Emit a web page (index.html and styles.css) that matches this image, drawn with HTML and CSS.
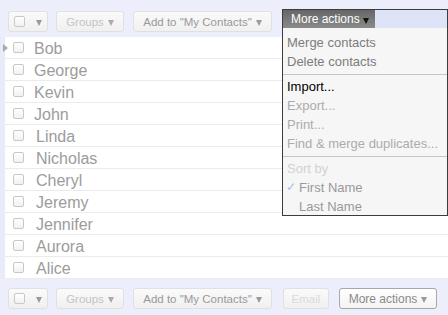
FILE: index.html
```html
<!DOCTYPE html>
<html lang="en">
<head>
    <meta charset="UTF-8">
    <meta name="viewport" content="width=device-width, initial-scale=1.0">
    <title>Contacts</title>
    <link rel="stylesheet" href="styles.css">
</head>
<body>

    <div class="toolbar toolbar-top">
        <button class="btn btn-check"><span class="box"></span><span class="caret"></span></button>
        <button class="btn btn-groups">Groups<span class="caret"></span></button>
        <button class="btn btn-add">Add to "My Contacts"<span class="caret"></span></button>

        <!-- open "More actions" menu -->
        <div class="menu">
            <div class="menu-head">
                <span class="menu-tab">More actions<span class="caret caret-dark"></span></span>
            </div>
            <div class="menu-body">
                <div class="item item-mid">Merge contacts</div>
                <div class="item item-mid">Delete contacts</div>
                <div class="sep"></div>
                <div class="item item-on">Import...</div>
                <div class="item item-off">Export...</div>
                <div class="item item-off">Print...</div>
                <div class="item item-off">Find &amp; merge duplicates...</div>
                <div class="sep"></div>
                <div class="item item-label">Sort by</div>
                <div class="item item-sort"><span class="check">&#10003;</span>First Name</div>
                <div class="item item-sort">Last Name</div>
            </div>
        </div>
    </div>

    <ul class="contacts">
        <li class="row current"><span class="marker"></span><span class="box"></span><span class="name">Bob</span></li>
        <li class="row"><span class="box"></span><span class="name">George</span></li>
        <li class="row"><span class="box"></span><span class="name">Kevin</span></li>
        <li class="row"><span class="box"></span><span class="name">John</span></li>
        <li class="row"><span class="box"></span><span class="name shift">Linda</span></li>
        <li class="row"><span class="box"></span><span class="name shift">Nicholas</span></li>
        <li class="row"><span class="box"></span><span class="name shift">Cheryl</span></li>
        <li class="row"><span class="box"></span><span class="name shift">Jeremy</span></li>
        <li class="row"><span class="box"></span><span class="name shift">Jennifer</span></li>
        <li class="row"><span class="box"></span><span class="name shift">Aurora</span></li>
        <li class="row"><span class="box"></span><span class="name shift">Alice</span></li>
    </ul>

    <div class="toolbar toolbar-bottom">
        <button class="btn btn-check"><span class="box"></span><span class="caret"></span></button>
        <button class="btn btn-groups">Groups<span class="caret"></span></button>
        <button class="btn btn-add">Add to "My Contacts"<span class="caret"></span></button>
        <button class="btn btn-email">Email</button>
        <button class="btn btn-more">More actions<span class="caret"></span></button>
    </div>

</body>
</html>
```

FILE: styles.css
```css
* {
    margin: 0;
    padding: 0;
    box-sizing: border-box;
}

body {
    font-family: "Liberation Sans", Arial, sans-serif;
    background-color: #e8ebf9;
    color: #999;
    width: 448px;
    height: 315px;
    overflow: hidden;
}

/* toolbars */

.toolbar {
    display: flex;
    align-items: flex-start;
    background-color: #eceffb;
    padding-left: 8px;
}

.toolbar-top {
    position: relative;
    height: 37px;
    padding-top: 11px;
}

.toolbar-bottom {
    height: 36px;
    padding-top: 9px;
}

.btn {
    display: flex;
    align-items: center;
    justify-content: center;
    height: 21px;
    margin-right: 8px;
    font-family: inherit;
    font-size: 11.5px;
    color: #c4c4c4;
    background: linear-gradient(#fafafa, #f0f0f0);
    border: 1px solid #e0e0e0;
    border-radius: 3px;
    white-space: nowrap;
}

.btn-check {
    width: 40px;
    justify-content: flex-start;
    padding-left: 5px;
}

.btn-check .box {
    margin-right: 7px;
}

.btn-groups {
    width: 68px;
    margin-right: 9px;
}

.btn-add {
    width: 139px;
    color: #999;
    margin-right: 11px;
}

.btn-email {
    width: 46px;
    color: #dadada;
    margin-right: 10px;
}

.btn-more {
    width: 98px;
    font-size: 12px;
    color: #8a8a8a;
    background: linear-gradient(#ffffff, #f3f3f3);
    border-color: #a8a8a8;
}

.caret {
    display: inline-block;
    width: 0;
    height: 0;
    margin-left: 4px;
    margin-top: 3px;
    border-left: 3.5px solid transparent;
    border-right: 3.5px solid transparent;
    border-top: 6px solid #9a9a9a;
}

.btn-groups .caret {
    border-top-color: #aaa;
}

.caret-dark {
    border-top-color: #111;
    margin-left: 3px;
}

.box {
    display: inline-block;
    width: 11px;
    height: 11px;
    border: 1px solid #c8c8c8;
    border-radius: 2px;
    background: linear-gradient(#ffffff, #f1f1f1);
    flex-shrink: 0;
}

/* dropdown menu */

.menu {
    position: absolute;
    left: 282px;
    top: 9px;
    width: 166px;
    height: 207px;
    border: 1px solid #3c3c3c;
    background-color: #f6f6f6;
    z-index: 10;
}

.menu-head {
    height: 18px;
    background-color: #dfe3f8;
}

.menu-tab {
    display: flex;
    align-items: center;
    width: 92px;
    height: 18px;
    padding-left: 8px;
    font-size: 12px;
    color: #fff;
    white-space: nowrap;
    background: linear-gradient(#666, #8a8a8a);
}

.menu-body {
    padding-top: 5px;
}

.item {
    height: 19px;
    line-height: 19px;
    padding-left: 4px;
    font-size: 13px;
    white-space: nowrap;
}

.item-mid {
    color: #7c7c7c;
}

.item-on {
    color: #000;
}

.item-off {
    color: #acacac;
}

.item-label {
    color: #d2d2d2;
}

.item-sort {
    color: #999;
    padding-left: 16px;
    position: relative;
}

.check {
    position: absolute;
    left: 3px;
    color: #a9c0ea;
    font-size: 12px;
}

.sep {
    height: 1px;
    margin: 3px 0 2px;
    background-color: #c6c6c6;
}

/* contact list */

.contacts {
    list-style: none;
    margin-left: 5px;
    background-color: #fff;
}

.row {
    position: relative;
    display: flex;
    align-items: center;
    height: 22px;
    padding-left: 8px;
    border-bottom: 1px solid #ebebeb;
}

.row .box {
    margin-right: 10px;
}

.name {
    font-size: 16px;
    color: #9c9c9c;
    padding-top: 2px;
}

.name.shift {
    margin-left: 2px;
}

.marker {
    position: absolute;
    left: -2px;
    top: 7px;
    width: 0;
    height: 0;
    border-top: 4px solid transparent;
    border-bottom: 4px solid transparent;
    border-left: 5px solid #aaa;
}
```
